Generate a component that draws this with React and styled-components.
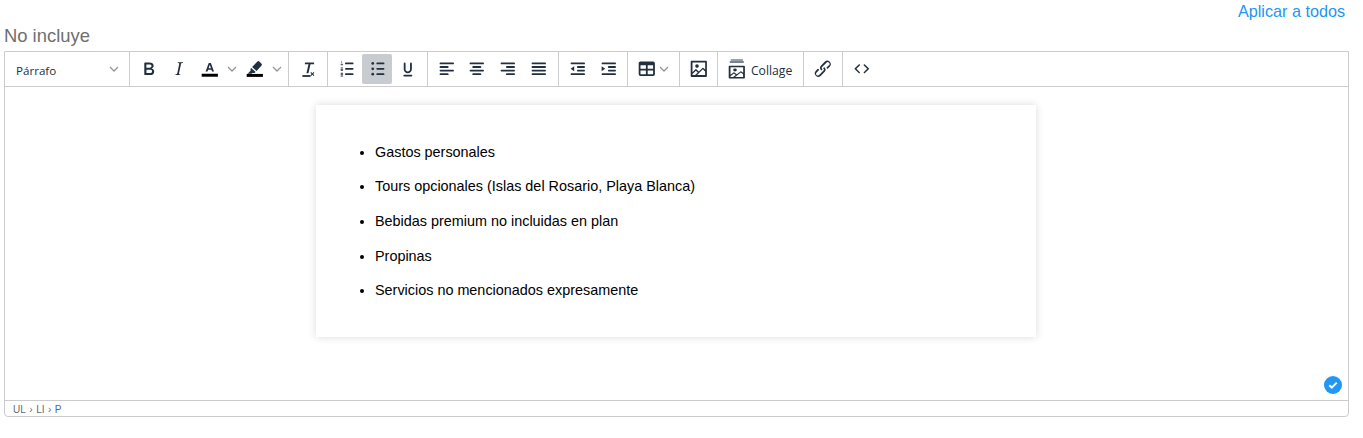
import React from "react";
import styled, { createGlobalStyle } from "styled-components";

const INK = "#222f3e";

const GlobalStyle = createGlobalStyle`
  html, body {
    margin: 0;
    padding: 0;
    background: #fff;
    font-family: "Liberation Sans", Arial, sans-serif;
  }
`;

const Page = styled.div`
  padding: 0 14px 0 4px;
`;

const TopRow = styled.div`
  display: flex;
  justify-content: flex-end;
  height: 24px;
  padding-right: 4px;
`;

const ApplyLink = styled.a`
  color: #2196f3;
  font-size: 16.2px;
  line-height: 23px;
  cursor: pointer;
`;

const FieldLabel = styled.div`
  color: #6f6f6f;
  font-size: 18.4px;
  line-height: 24px;
  height: 27px;
`;

const Editor = styled.div`
  display: flex;
  flex-direction: column;
  height: 366px;
  box-sizing: border-box;
  border: 1px solid #ccc;
  border-radius: 0 0 4px 4px;
`;

const Toolbar = styled.div`
  display: flex;
  height: 35px;
  flex: none;
  box-sizing: border-box;
  border-bottom: 1px solid #ccc;
`;

const Group = styled.div`
  display: flex;
  align-items: center;
  padding: 0 ${(p) => p.$right ?? 3.6}px 0 3.6px;
  border-right: 1px solid #ccc;
`;

const LastGroup = styled(Group)`
  border-right: none;
`;

const FormatGroup = styled(Group)`
  width: 116.4px;
`;

const FormatSelect = styled.div`
  flex: 1;
  display: flex;
  align-items: center;
  justify-content: space-between;
  height: 30.6px;
  padding: 0 6px 0 7.4px;
  font-family: "Open Sans", sans-serif;
  font-size: 11.6px;
  color: ${INK};
`;

const ButtonText = styled.span`
  padding-top: ${(p) => p.$top}px;
`;

const ToolButton = styled.div`
  width: 30.6px;
  height: 30.6px;
  display: flex;
  align-items: center;
  justify-content: center;
  flex: none;
  border-radius: 2px;
  background: ${(p) => (p.$active ? "#c8cbcf" : "transparent")};
`;

const CaretButton = styled.div`
  width: 14.4px;
  height: 30.6px;
  display: flex;
  align-items: center;
  justify-content: center;
  flex: none;
`;

const MenuCaretButton = styled(CaretButton)`
  width: 13.4px;
  box-sizing: border-box;
  padding-right: 8.6px;
`;

const LabelButton = styled.div`
  display: flex;
  align-items: center;
  width: 77.8px;
  height: 30.6px;
  box-sizing: border-box;
  padding-left: 4.6px;
  gap: 3.4px;
  font-family: "Open Sans", sans-serif;
  font-size: 12.2px;
  color: ${INK};
`;

const Icon = styled.svg`
  width: 21.6px;
  height: 21.6px;
  flex: none;
  fill: ${INK};
`;

const Caret = styled.svg`
  width: 10px;
  height: 10px;
  flex: none;
  fill: none;
  stroke: rgba(34, 47, 62, 0.5);
  stroke-width: 1.3;
`;

const Canvas = styled.div`
  flex: 1;
  position: relative;
  display: flex;
  justify-content: center;
  padding: 18px 1px 0 0;
`;

const Sheet = styled.div`
  width: 720px;
  height: 232px;
  box-sizing: border-box;
  padding-left: 23px;
  background: #fff;
  box-shadow: 0 0 8px rgba(0, 0, 0, 0.15);
  color: #000;
  font-size: 14.4px;
`;

const List = styled.ul`
  margin: 0;
  padding: 36.8px 0 0 36px;
`;

const Item = styled.li`
  line-height: 20px;
  margin-bottom: 14.6px;
`;

const SavedBadge = styled.svg`
  position: absolute;
  right: 5px;
  bottom: 5px;
  width: 20px;
  height: 20px;
`;

const StatusBar = styled.div`
  flex: none;
  height: 16px;
  box-sizing: border-box;
  border-top: 1px solid #ccc;
  padding: 1px 0 0 8px;
  display: flex;
  align-items: center;
  gap: 3.5px;
  font-size: 10px;
  color: rgba(34, 47, 62, 0.75);
`;

const Crumb = styled.span`
  color: ${(p) => (p.$current ? "#4a6a94" : "inherit")};
`;

const chevron = (
  <Caret viewBox="0 0 10 10">
    <path d="M1 3l4 4 4-4" />
  </Caret>
);

// rows of [x, y, width] drawn as rounded bars
const Bars = ({ rows, h = 2 }) => (
  <>
    {rows.map(([x, y, w], i) => (
      <rect key={i} x={x} y={y} width={w} height={h} rx={h / 2} />
    ))}
  </>
);

const ALIGN_LEFT = [[4, 5, 16], [4, 9, 10], [4, 13, 16], [4, 17, 10]];
const ALIGN_CENTER = [[4, 5, 16], [7, 9, 10], [4, 13, 16], [7, 17, 10]];
const ALIGN_RIGHT = [[4, 5, 16], [10, 9, 10], [4, 13, 16], [10, 17, 10]];
const ALIGN_FULL = [[4, 5, 16], [4, 9, 16], [4, 13, 16], [4, 17, 16]];
const INDENT_ROWS = [[4, 5, 16], [11, 9, 9], [11, 13, 9], [4, 17, 16]];

const IMAGE_PATH =
  "M5 15.700l3.300-3.200c.3-.3.7-.3 1 0L12 15l4.100-4c.3-.4.800-.4 1 0l2 1.900V5H5v10.700ZM5 18v1h3l2.800-2.900-2-2L5 17.900V18Zm14-3l-2.500-2.400-6.400 6.400H19v-4ZM4 3h16c.6 0 1 .4 1 1v16c0 .6-.4 1-1 1H4a1 1 0 0 1-1-1V4c0-.6.4-1 1-1Zm6 8a2 2 0 1 0 0-4 2 2 0 0 0 0 4Z";

function App() {
  const items = [
    "Gastos personales",
    "Tours opcionales (Islas del Rosario, Playa Blanca)",
    "Bebidas premium no incluidas en plan",
    "Propinas",
    "Servicios no mencionados expresamente",
  ];

  return (
    <Page>
      <GlobalStyle />
      <TopRow>
        <ApplyLink>Aplicar a todos</ApplyLink>
      </TopRow>
      <FieldLabel>No incluye</FieldLabel>
      <Editor>
        <Toolbar>
          <FormatGroup>
            <FormatSelect>
              <ButtonText $top={2}>Párrafo</ButtonText>
              {chevron}
            </FormatSelect>
          </FormatGroup>

          <Group>
            <ToolButton>
              <Icon viewBox="0 0 24 24">
                <path d="M7.800 19c-.3 0-.5 0-.6-.2l-.2-.5V5.700c0-.2 0-.4.2-.5l.6-.2h5c1.500 0 2.700.3 3.500 1 .7.6 1.100 1.400 1.100 2.500a3 3 0 0 1-.6 1.900c-.4.6-1 1-1.600 1.200.4.1.9.3 1.300.6s.8.7 1 1.200c.4.4.5 1 .5 1.600 0 1.300-.4 2.300-1.300 3-.8.7-2.100 1-3.800 1H7.800Zm5-8.300c.6 0 1.200-.1 1.600-.5.4-.3.6-.7.6-1.300 0-1.100-.8-1.700-2.300-1.700H9.300v3.500h3.500Zm.5 6c.7 0 1.300-.1 1.700-.4.4-.4.6-.9.6-1.500s-.2-1-.7-1.400c-.4-.3-1-.4-2-.4H9.400v3.700h3.900Z" />
              </Icon>
            </ToolButton>
            <ToolButton>
              <Icon viewBox="0 0 24 24">
                <path d="M16.700 4.700l-.1.9h-.3c-.6 0-1 0-1.400.3-.3.3-.4.6-.5 1.100l-2.100 9.800v.6c0 .5.4.8 1.400.8h.2l-.2.8H8l.2-.8h.2c1.100 0 1.800-.5 2-1.500l2-9.800.1-.5c0-.6-.4-.8-1.400-.8h-.3l.2-.9h5.800Z" />
              </Icon>
            </ToolButton>
            <ToolButton>
              <Icon viewBox="0 0 24 24">
                <path d="M10.800 5.500h2.400l3.500 9.500h-2.200l-.7-2h-3.600l-.7 2H7.300l3.500-9.500Zm-.1 5.800h2.600L12 7.600l-1.300 3.700Z" />
                <rect x="3" y="17.500" width="18" height="3.300" fill="#000" />
              </Icon>
            </ToolButton>
            <CaretButton>{chevron}</CaretButton>
            <ToolButton>
              <Icon viewBox="0 0 24 24">
                <path d="M15 3.800a1.500 1.500 0 0 1 2 0l2.500 2.500a1.500 1.500 0 0 1 0 2L14 14.500 9 10l6-6.200ZM8 11l5 4.500-1.500 1.300H9.200l-.8.700H4l3.300-3.300V12l.7-1Z" />
                <rect x="3" y="17.700" width="18" height="3.300" fill="#000" />
              </Icon>
            </ToolButton>
            <CaretButton>{chevron}</CaretButton>
          </Group>

          <Group>
            <ToolButton>
              <Icon viewBox="0 0 24 24">
                <path d="M9 5h10v2h-4l-2.300 10h-2.200L12.800 7H8.600L9 5Z" />
                <rect x="6" y="19" width="9" height="2" />
                <path d="M15.700 15.500l1.400 1.400 1.400-1.400.8.800-1.400 1.400 1.400 1.400-.8.800-1.400-1.400-1.400 1.400-.8-.8 1.400-1.400-1.400-1.400.8-.8Z" />
              </Icon>
            </ToolButton>
          </Group>

          <Group>
            <ToolButton>
              <Icon viewBox="0 0 24 24">
                <Bars rows={[[10, 5, 9.500], [10, 11, 9.500], [10, 17, 9.500]]} />
                <Bars h={1} rows={[[5.500, 4, 1.500], [6, 5.500, 1], [5, 7, 3], [5, 10.500, 3], [5, 12, 3], [5, 13.500, 3], [5, 16.500, 3], [5, 18, 3], [5, 19.500, 3]]} />
              </Icon>
            </ToolButton>
            <ToolButton $active>
              <Icon viewBox="0 0 24 24">
                <Bars rows={[[11.500, 5, 9], [11.500, 11, 9], [11.500, 17, 9]]} />
                <circle cx="7.500" cy="6" r="1.500" />
                <circle cx="7.500" cy="12" r="1.500" />
                <circle cx="7.500" cy="18" r="1.500" />
              </Icon>
            </ToolButton>
            <ToolButton>
              <Icon viewBox="0 0 24 24">
                <path d="M15.500 5c.6 0 1 .4 1 1v6.500c0 2.500-2 4.500-4.500 4.500s-4.500-2-4.500-4.500V6c0-.6.4-1 1-1s1 .4 1 1v6.500c0 1.400 1.100 2.500 2.500 2.500s2.500-1.100 2.500-2.500V6c0-.6.4-1 1-1Z" />
                <rect x="7" y="18.500" width="10" height="2" rx="1" />
              </Icon>
            </ToolButton>
          </Group>

          <Group $right={4.2}>
            {[ALIGN_LEFT, ALIGN_CENTER, ALIGN_RIGHT, ALIGN_FULL].map((rows, i) => (
              <ToolButton key={i}>
                <Icon viewBox="0 0 24 24">
                  <Bars rows={rows} />
                </Icon>
              </ToolButton>
            ))}
          </Group>

          <Group $right={3}>
            <ToolButton>
              <Icon viewBox="0 0 24 24">
                <Bars rows={INDENT_ROWS} />
                <path d="M8 9.200v5.600L4 12l4-2.800Z" />
              </Icon>
            </ToolButton>
            <ToolButton>
              <Icon viewBox="0 0 24 24">
                <Bars rows={INDENT_ROWS} />
                <path d="M4 9.200v5.600L8 12 4 9.200Z" />
              </Icon>
            </ToolButton>
          </Group>

          <Group>
            <ToolButton>
              <Icon viewBox="0 0 24 24">
                <path d="M19 4a2 2 0 0 1 2 2v12a2 2 0 0 1-2 2H5a2 2 0 0 1-2-2V6c0-1.100.9-2 2-2h14ZM5 14v4h6v-4H5Zm14 0h-6v4h6v-4Zm0-6h-6v4h6V8ZM5 12h6V8H5v4Z" />
              </Icon>
            </ToolButton>
            <MenuCaretButton>{chevron}</MenuCaretButton>
          </Group>

          <Group $right={2.8}>
            <ToolButton>
              <Icon viewBox="0 0 24 24">
                <path d={IMAGE_PATH} />
              </Icon>
            </ToolButton>
          </Group>

          <Group>
            <LabelButton>
              <Icon viewBox="0 0 24 24">
                <rect x="5" y="1.400" width="14" height="1.600" rx="0.8" opacity="0.6" />
                <rect x="4" y="3.600" width="16" height="1.600" rx="0.8" opacity="0.8" />
                <g transform="translate(0 6.300) scale(1 0.78)">
                  <path d={IMAGE_PATH} />
                </g>
              </Icon>
              <ButtonText $top={3}>Collage</ButtonText>
            </LabelButton>
          </Group>

          <Group>
            <ToolButton>
              <Icon viewBox="0 0 24 24">
                <path d="M6.200 12.300a1 1 0 0 1 1.400 1.400l-2 2a2 2 0 1 0 2.600 2.800l4.800-4.800a1 1 0 0 0 0-1.400 1 1 0 1 1 1.400-1.300 2.900 2.900 0 0 1 0 4L9.600 20a3.900 3.900 0 0 1-5.500-5.500l2-2.200Zm11.600-.6a1 1 0 0 1-1.400-1.400l2.100-2a2 2 0 1 0-2.700-2.800L11 10.300a1 1 0 0 0 0 1.400A1 1 0 1 1 9.600 13a2.900 2.900 0 0 1 0-4L14.400 4a3.900 3.900 0 0 1 5.500 5.500l-2.100 2.200Z" />
              </Icon>
            </ToolButton>
          </Group>

          <LastGroup>
            <ToolButton>
              <Icon viewBox="0 0 24 24">
                <path d="M9.800 15.700c.3.3.3.8 0 1-.3.4-.9.4-1.200 0l-4.400-4.100a.8.800 0 0 1 0-1.200l4.400-4.200c.3-.3.9-.3 1.200 0 .3.3.3.8 0 1.100L6 12l3.800 3.700ZM14.200 15.700c-.3.3-.3.8 0 1 .4.4.9.4 1.300 0l4.300-4.100c.3-.3.4-.8 0-1.200l-4.300-4.200a.9.900 0 0 0-1.300 0c-.3.3-.3.8 0 1.100L18 12l-3.800 3.700Z" />
              </Icon>
            </ToolButton>
          </LastGroup>
        </Toolbar>

        <Canvas>
          <Sheet>
            <List>
              {items.map((item) => (
                <Item key={item}>{item}</Item>
              ))}
            </List>
          </Sheet>
          <SavedBadge viewBox="0 0 20 20">
            <circle cx="10" cy="10" r="9" fill="#2196f3" />
            <path d="M6.300 10.300l2.500 2.300 4.900-5" fill="none" stroke="#fff" strokeWidth="2" />
          </SavedBadge>
        </Canvas>

        <StatusBar>
          <Crumb>UL</Crumb>
          <span>›</span>
          <Crumb>LI</Crumb>
          <span>›</span>
          <Crumb $current>P</Crumb>
        </StatusBar>
      </Editor>
    </Page>
  );
}

export default App;
